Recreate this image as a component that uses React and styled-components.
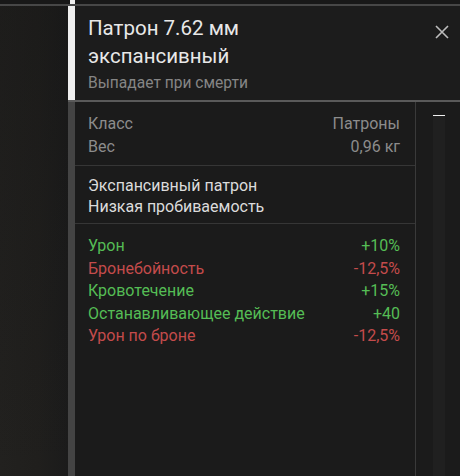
import React from "react";
import styled, { createGlobalStyle } from "styled-components";

const Global = createGlobalStyle`
  html, body { margin: 0; padding: 0; background: #1c1c1b; }
  body { font-family: Roboto, "Noto Sans", sans-serif; }
  #root { width: 460px; height: 476px; overflow: hidden; }
`;

const Page = styled.div`
  width: 460px;
  height: 476px;
  display: flex;
  flex-direction: column;
  background: #1b1b1b;
`;

const TopStrip = styled.div`
  height: 4px;
  display: flex;
  background: #181818;
`;

const TopStub = styled.div`
  margin-left: 70px;
  width: 5px;
  background: #efefef;
`;

const TopLine = styled.div`
  height: 2px;
  background: #474747;
`;

const Main = styled.div`
  flex: 1;
  display: flex;
  min-height: 0;
`;

const LeftPane = styled.div`
  width: 68px;
  background:
    linear-gradient(to bottom, rgba(20, 20, 20, 0.35), rgba(20, 20, 20, 0)),
    linear-gradient(to right, #22211f 0%, #201f1d 55%, #1b1b1b 100%);
`;

const Card = styled.div`
  flex: 1;
  display: flex;
  flex-direction: column;
  background: #1b1b1b;
`;

const HeaderRow = styled.div`
  height: 94px;
  display: flex;
`;

const Accent = styled.div`
  width: 7px;
  background: ${(p) => p.$color};
`;

const Header = styled.div`
  flex: 1;
  position: relative;
  padding: 8px 40px 0 13px;
  background: #1c1c1c;
`;

const Title = styled.div`
  font-size: 20.5px;
  line-height: 28px;
  color: #e8e8e8;
`;

const Subtitle = styled.div`
  margin-top: 2px;
  font-size: 15.6px;
  line-height: 22px;
  color: #858585;
`;

const Close = styled.button`
  position: absolute;
  top: 12px;
  right: 5px;
  width: 27px;
  height: 27px;
  padding: 0;
  border: 0;
  background: transparent;
  display: flex;
  align-items: center;
  justify-content: center;
  cursor: pointer;
`;

const Divider = styled.div`
  height: 2px;
  background: #5a5a5a;
`;

const BodyRow = styled.div`
  flex: 1;
  display: flex;
`;

const Body = styled.div`
  flex: 1;
  border-right: 1px solid #3a3a3a;
  display: flex;
  flex-direction: column;
`;

const Section = styled.div`
  padding: ${(p) => p.$pad};
  border-bottom: ${(p) => (p.$last ? "none" : "1.5px solid #363636")};
`;

const Row = styled.div`
  display: flex;
  justify-content: space-between;
  font-size: 16px;
  line-height: ${(p) => p.$lh || "22.5px"};
  color: ${(p) => p.$color};
`;

const Scroll = styled.div`
  width: 44px;
  display: flex;
  justify-content: center;
  padding-top: 13px;
  box-sizing: border-box;
`;

const Track = styled.div`
  width: 12px;
  margin-left: 2px;
  background: #202020;
  border-top: 1px solid #f0f0f0;
`;

const GREY = "#8c8c8c";
const GREEN = "#55bd55";
const RED = "#c44b4b";

const stats = [
  ["Урон", "+10%", GREEN],
  ["Бронебойность", "-12,5%", RED],
  ["Кровотечение", "+15%", GREEN],
  ["Останавливающее действие", "+40", GREEN],
  ["Урон по броне", "-12,5%", RED],
];

export default function App() {
  return (
    <>
      <Global />
      <Page>
        <TopStrip>
          <TopStub />
        </TopStrip>
        <TopLine />
        <Main>
          <LeftPane />
          <Card>
            <HeaderRow>
              <Accent $color="#efefef" />
              <Header>
                <Title>Патрон 7.62 мм</Title>
                <Title>экспансивный</Title>
                <Subtitle>Выпадает при смерти</Subtitle>
                <Close aria-label="Закрыть">
                  <svg width="14" height="14" viewBox="0 0 14 14">
                    <path d="M1 1 L13 13 M13 1 L1 13" stroke="#bdbdbd" strokeWidth="1.6" />
                  </svg>
                </Close>
              </Header>
            </HeaderRow>
            <Divider />
            <BodyRow>
              <Accent $color="#444444" />
              <Body>
                <Section $pad="11px 15px 7px 13px">
                  <Row $color={GREY}>
                    <span>Класс</span>
                    <span>Патроны</span>
                  </Row>
                  <Row $color={GREY}>
                    <span>Вес</span>
                    <span>0,96 кг</span>
                  </Row>
                </Section>
                <Section $pad="10px 15px 6px 13px">
                  <Row $color="#dcdcdc" $lh="20.5px">
                    <span>Экспансивный патрон</span>
                  </Row>
                  <Row $color="#dcdcdc" $lh="20.5px">
                    <span>Низкая пробиваемость</span>
                  </Row>
                </Section>
                <Section $pad="11px 15px 0 13px" $last>
                  {stats.map(([k, v, c]) => (
                    <Row key={k} $color={c}>
                      <span>{k}</span>
                      <span>{v}</span>
                    </Row>
                  ))}
                </Section>
              </Body>
              <Scroll>
                <Track />
              </Scroll>
            </BodyRow>
          </Card>
        </Main>
      </Page>
    </>
  );
}
